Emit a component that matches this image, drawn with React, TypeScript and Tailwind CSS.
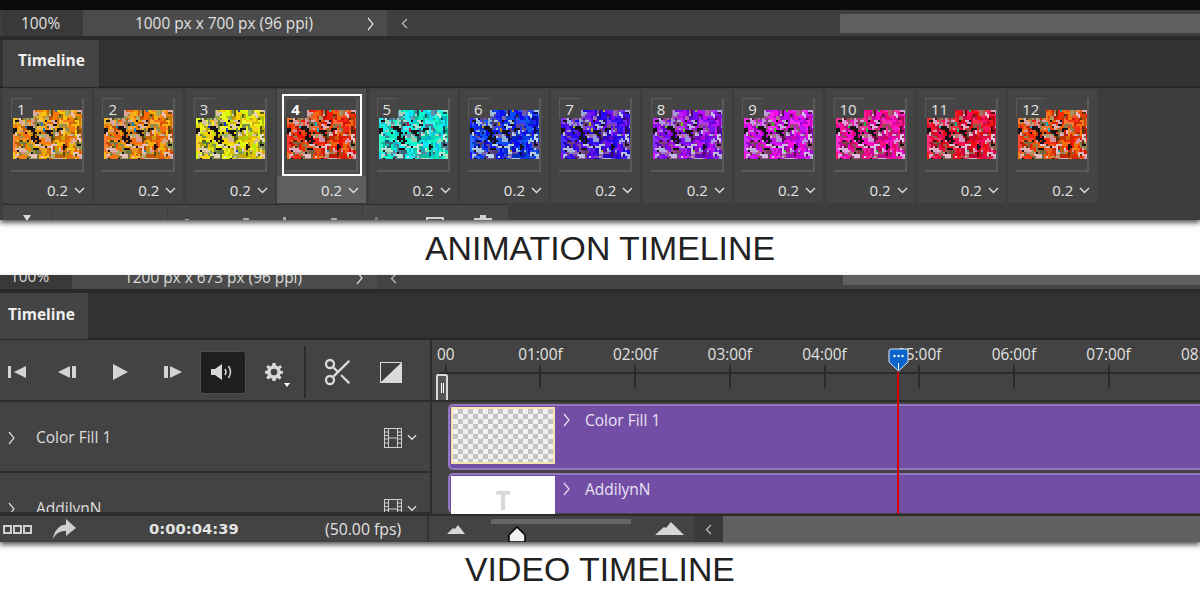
import { Scissors } from "lucide-react";

const UI = "font-['Open_Sans',sans-serif]";

// hue of every frame in the animation strip
const frames = [
  { n: 1, hue: 36 },
  { n: 2, hue: 32 },
  { n: 3, hue: 58 },
  { n: 4, hue: 12 },
  { n: 5, hue: 176 },
  { n: 6, hue: 232 },
  { n: 7, hue: 256 },
  { n: 8, hue: 276 },
  { n: 9, hue: 296 },
  { n: 10, hue: 322 },
  { n: 11, hue: 350 },
  { n: 12, hue: 16 },
];

const rulerLabels = ["00", "01:00f", "02:00f", "03:00f", "04:00f", "05:00f", "06:00f", "07:00f", "08:00f"];

function makeRandom(seed: number) {
  let s = seed;
  return () => {
    s = (s * 16807) % 2147483647;
    return s / 2147483647;
  };
}

// same noise for every frame, only the hue moves. cells copy a neighbour now and then so they clump
function Mosaic({ hue }: { hue: number }) {
  const rand = makeRandom(74511);
  const grid: string[][] = [];
  const cells = [];
  for (let y = 0; y < 25; y++) {
    grid.push([]);
    for (let x = 0; x < 35; x++) {
      const r = rand();
      const c = rand();
      const left = 1 - x / 35;
      const spot = Math.abs(x - 8 - (y - 8) * 0.5) < 1.6 && y > 7 && y < 17;
      let fill = `hsl(${hue + rand() * 26 - 13} 95% ${36 + rand() * 24}%)`;
      if (r < 0.06 || (spot && r < 0.6)) fill = "#171015";
      else if (r < 0.1) fill = `hsl(${hue + 10} 80% 20%)`;
      else if (r < 0.2 + left * 0.14) fill = `hsl(${hue + 335} 45% ${66 + rand() * 18}%)`;
      else if (r < 0.28 + left * 0.26) fill = `hsl(${hue + 25} 32% ${34 + rand() * 24}%)`;
      else if (r < 0.31 + left * 0.26) fill = `hsl(${hue + 170} 75% 42%)`;
      if (!spot && c < 0.3 && x > 0) fill = grid[y][x - 1];
      else if (!spot && c < 0.6 && y > 0) fill = grid[y - 1][x];
      grid[y].push(fill);
      cells.push(<rect key={x + "-" + y} x={x * 2} y={y * 2} width={2.1} height={2.1} fill={fill} />);
    }
  }
  return (
    <svg width="69" height="49" viewBox="0 0 69 49" className="block blur-[0.3px]">
      {cells}
    </svg>
  );
}

function ChevronThin({ className = "" }: { className?: string }) {
  return (
    <svg width="7" height="14" viewBox="0 0 7 14" className={className} fill="none" stroke="currentColor" strokeWidth="1.2">
      <path d="M1 1 L6 7 L1 13" />
    </svg>
  );
}

function ChevronLeft() {
  return (
    <svg width="7" height="11" viewBox="0 0 7 11" fill="none" stroke="#b5b5b5" strokeWidth="1.4">
      <path d="M6 1 L1.5 5.5 L6 10" />
    </svg>
  );
}

function ChevronDown({ w = 11 }: { w?: number }) {
  return (
    <svg width={w} height="7" viewBox="0 0 11 7" fill="none" stroke="#dedede" strokeWidth="1.4">
      <path d="M1 1 L5.5 5.5 L10 1" />
    </svg>
  );
}

function FilmIcon() {
  return (
    <svg width="18" height="20" viewBox="0 0 18 20" fill="none" stroke="#cfcfcf" strokeWidth="1" className="shrink-0">
      <rect x="0.5" y="0.5" width="17" height="19" />
      <path d="M4.5 0.5 V19.5 M13.5 0.5 V19.5 M4.5 10 H13.5 M0.5 4 H4.5 M0.5 7.5 H4.5 M0.5 11 H4.5 M0.5 15 H4.5 M13.5 4 H17.5 M13.5 7.5 H17.5 M13.5 11 H17.5 M13.5 15 H17.5" />
    </svg>
  );
}

function Frame({ n, hue }: { n: number; hue: number }) {
  const selected = n === 4;
  return (
    <div className={"relative w-[89px] h-[114px] shrink-0 mr-[2.4px] " + (selected ? "bg-[#4d4d4d]" : "bg-[#444444]")}>
      {selected && <div className="absolute left-0 right-0 bottom-0 h-[27px] bg-[#5f5f5f]" />}
      {selected && <div className="absolute left-[5px] top-[5px] w-[80px] h-[82px] border-2 border-white" />}
      <div className="absolute left-[8px] top-[9px] w-[73px] h-[74px] bg-[#454545] border-r-2 border-b-2 border-[#5a5a5a]">
        <div className="mt-[12px] ml-[2px]">
          <Mosaic hue={hue} />
        </div>
      </div>
      <div
        className={
          "absolute left-[8px] top-[9px] h-[20px] bg-[#464646] border-t border-l border-[#5a5a5a] text-[15px] leading-[20px] pl-[5px] pr-[7px] " +
          (selected ? "text-white font-bold" : "text-[#e4e4e4]")
        }
      >
        {n}
      </div>
      <div className="absolute right-[7px] bottom-[3px] flex items-center gap-[6px] text-[15px] leading-[20px] text-[#e4e4e4]">
        0.2
        <ChevronDown />
      </div>
    </div>
  );
}

function AnimationPanel() {
  return (
    <div className={"relative z-10 h-[220px] overflow-hidden bg-[#3d3d3d] shadow-[0_3px_5px_rgba(0,0,0,0.65)] text-[#e0e0e0] " + UI}>
      <div className="h-[10px] bg-[#0a0a0a]" />
      <div className="h-[26px] flex items-center bg-[#3e3e3e] pl-[3px]">
        <div className="w-[80px] h-full bg-[#393939] pl-[18px] text-[15.4px] leading-[27px]">100%</div>
        <div className="w-[304px] h-full bg-[#4b4b4b] flex items-center pl-[52px] pt-px text-[15.4px]">
          <span>1000 px x 700 px (96 ppi)</span>
          <ChevronThin className="ml-[54px]" />
        </div>
        <div className="ml-[14px]">
          <ChevronLeft />
        </div>
        <div className="ml-auto w-[360px] h-[19px] bg-[#606060] rounded-l-[2px]" />
      </div>
      <div className="h-[4px] bg-[#2a2a2a]" />
      <div className="h-[48px] flex bg-[#323232] border-b-2 border-[#262626] pl-[3px]">
        <div className="w-[96px] h-[47px] bg-[#444444] pl-[15px] text-[15.5px] leading-[40px] font-bold text-[#f0f0f0]">Timeline</div>
      </div>
      <div className="h-[114px] mt-px flex pl-[3px]">
        {frames.map((f) => (
          <Frame key={f.n} n={f.n} hue={f.hue} />
        ))}
      </div>
      <div className="h-[16px] mt-px flex pl-[3px] gap-px text-[#cfcfcf]">
        <div className="w-[48px] bg-[#474747] border-t border-[#2c2c2c] flex justify-end pr-[20px] pt-[10px]">
          <div className="w-0 h-0 border-x-[4px] border-x-transparent border-t-[6px] border-t-[#dcdcdc]" />
        </div>
        <div className="w-[115px] bg-[#474747] border-t border-[#2c2c2c]" />
        <div className="w-[194px] bg-[#474747] border-t border-[#2c2c2c] relative">
          <div className="absolute left-[17px] top-[14px] w-[4px] h-px bg-[#aaaaaa]" />
          <div className="absolute left-[75px] top-[13px] w-[6px] h-[2px] bg-[#aaaaaa]" />
          <div className="absolute left-[115px] top-[12px] w-[3px] h-[3px] bg-[#aaaaaa]" />
          <div className="absolute left-[163px] top-[13px] w-[6px] h-[2px] bg-[#aaaaaa]" />
        </div>
        <div className="w-[145px] bg-[#474747] border-t border-[#2c2c2c] relative">
          <div className="absolute left-[12px] top-[12px] w-[3px] h-[3px] bg-[#777777]" />
          <div className="absolute left-[63px] top-[12px] w-[18px] h-[8px] border-2 border-[#d0d0d0]" />
          <div className="absolute left-[111px] top-[13px] w-[18px] h-[2px] bg-[#d0d0d0]" />
          <div className="absolute left-[117px] top-[10px] w-[6px] h-[4px] border-2 border-[#d0d0d0]" />
        </div>
      </div>
    </div>
  );
}

function ControlRow() {
  return (
    <div className="h-[62px] pt-[4px] flex items-center border-b-2 border-[#2d2d2d] text-[#d4d4d4] relative">
      <svg width="18" height="14" viewBox="0 0 18 14" fill="#d4d4d4" className="ml-[8px]">
        <rect x="0" y="1" width="3" height="12" />
        <path d="M18 1 V13 L6 7 Z" />
      </svg>
      <svg width="18" height="14" viewBox="0 0 18 14" fill="#d4d4d4" className="ml-[32px]">
        <path d="M12 1 V13 L0 7 Z" />
        <rect x="14" y="1" width="4" height="12" />
      </svg>
      <svg width="16" height="16" viewBox="0 0 16 16" fill="#d4d4d4" className="ml-[37px]">
        <path d="M0 0 L15 8 L0 16 Z" />
      </svg>
      <svg width="18" height="14" viewBox="0 0 18 14" fill="#d4d4d4" className="ml-[35px]">
        <rect x="0" y="1" width="4" height="12" />
        <path d="M6 1 V13 L18 7 Z" />
      </svg>
      <div className="ml-[18px] w-[46px] h-[43px] rounded-[3px] bg-[#1e1e1e] border border-[#4e4e4e] flex items-center justify-center">
        <svg width="24" height="18" viewBox="0 0 24 18" fill="none">
          <path d="M0 6 H4 L11 1 V17 L4 12 H0 Z" fill="#d8d8d8" />
          <path d="M14 6 Q16 9 14 12 M17.5 3 Q21.5 9 17.5 15" stroke="#d8d8d8" strokeWidth="1.5" />
        </svg>
      </div>
      <svg width="18" height="18" viewBox="0 0 18 18" className="ml-[19px]">
        <path
          d="M7.5 0 H10.5 L11 2.6 L13.2 3.5 L15.4 2 L17 4.2 L15 6 L15.6 7.7 L18 8 V10.6 L15.6 11 L15 12.6 L16.6 14.6 L14.6 16.4 L12.6 15 L11 15.6 L10.5 18 H7.5 L7 15.6 L5.2 15 L3.2 16.4 L1.2 14.4 L2.8 12.5 L2.2 11 L0 10.6 V8 L2.2 7.5 L2.9 5.8 L1.2 4 L3.2 2 L5 3.4 L7 2.6 Z M9 5.8 A3.3 3.3 0 1 0 9 12.4 A3.3 3.3 0 1 0 9 5.8 Z"
          fill="#d8d8d8"
          fillRule="evenodd"
        />
      </svg>
      <div className="ml-px mt-[26px] w-0 h-0 border-x-[3.5px] border-x-transparent border-t-[4px] border-t-white" />
      <div className="ml-[14px] w-[2px] h-[52px] bg-[#2b2b2b]" />
      <Scissors size={32} strokeWidth={1.7} color="#dadada" className="ml-[16px] shrink-0" />
      <div className="ml-[26px] w-[22px] h-[21px] bg-[#dadada] border border-[#dadada] relative overflow-hidden">
        <svg width="20" height="19" viewBox="0 0 20 19" className="block">
          <path d="M0 0 H20 L0 19 Z" fill="#3d3d3d" />
        </svg>
      </div>
    </div>
  );
}

function LayerRow({ name, h }: { name: string; h: string }) {
  return (
    <div className={h + " flex items-start border-b-2 border-[#2d2d2d] overflow-hidden text-[#dedede] text-[15.5px]"}>
      <div className="flex items-center h-[71px]">
        <ChevronThin className="ml-[8px]" />
        <span className="ml-[21px] w-[348px]">{name}</span>
        <FilmIcon />
        <span className="ml-[5px]">
          <ChevronDown w={10} />
        </span>
      </div>
    </div>
  );
}

function Track({ name, tall }: { name: string; tall?: boolean }) {
  return (
    <div
      className={
        "ml-[16px] rounded-l-[5px] bg-[#724ea5] border-t-2 border-l-2 border-[#9478bf] flex " +
        (tall ? "h-[66px] border-b-2 mt-[2px] mb-[3px]" : "h-[40px]")
      }
    >
      {tall ? (
        <div className="ml-px mt-[1px] w-[104px] h-[57px] border-2 border-[#f4e6ae] bg-[length:10px_10px] bg-[conic-gradient(#c4c4c4_25%,#f2f2f2_0_50%,#c4c4c4_0_75%,#f2f2f2_0)] shrink-0" />
      ) : (
        <div className="ml-px mt-[1px] w-[104px] h-[60px] bg-white shrink-0 text-center text-[#d8d8d8] font-bold text-[26px] leading-[48px]">T</div>
      )}
      <ChevronThin className="ml-[8px] mt-[7px] text-[#e8e0f2]" />
      <span className="ml-[15px] mt-[3px] text-[15.5px] text-[#e9e2f3]">{name}</span>
    </div>
  );
}

function Ruler() {
  return (
    <div className="h-[62px] border-b-2 border-[#2d2d2d] relative overflow-hidden">
      <div className="flex ml-[-33.6px] w-[900px]">
        {rulerLabels.map((label, i) => (
          <div key={label} className="w-[94.7px] shrink-0 flex flex-col items-center">
            <span className="h-[20px] mt-[5px] text-[15.4px] leading-[20px] text-[#e2e2e2] whitespace-nowrap">{label}</span>
            <div className={"w-[2px] bg-[#2b2b2b] " + (i === 0 ? "h-[11px]" : "h-[23px]")} />
          </div>
        ))}
      </div>
      <div className="absolute left-[7px] right-0 top-[32px] h-[2px] bg-[#2b2b2b]" />
      <div className="absolute left-[4px] top-[34px] w-[12px] h-[28px] rounded-[2px] border-2 border-[#d8d8d8] bg-[#555555] flex items-center justify-center gap-px">
        <div className="w-px h-[10px] bg-white" />
        <div className="w-px h-[10px] bg-white" />
      </div>
    </div>
  );
}

function Playhead() {
  return (
    <div className="absolute left-[455.5px] top-[8px] w-[21px] h-[166px] flex flex-col items-center">
      <svg width="21" height="24" viewBox="0 0 21 24" className="shrink-0">
        <path d="M3 1 H18 Q20 1 20 3 V14 L10.5 23 L1 14 V3 Q1 1 3 1 Z" fill="#0a64cc" stroke="#dfe9f5" strokeWidth="1" />
        <circle cx="6.5" cy="8" r="1.2" fill="#fff" />
        <circle cx="10.5" cy="8" r="1.2" fill="#fff" />
        <circle cx="14.5" cy="8" r="1.2" fill="#fff" />
        <rect x="10" y="15" width="1" height="7" fill="#fff" />
      </svg>
      <div className="w-[2px] flex-1 bg-[#d40000]" />
    </div>
  );
}

function BottomBar() {
  return (
    <div className="h-[28px] flex bg-[#434343] border-t-2 border-[#2d2d2d] text-[#e2e2e2]">
      <div className="w-[429px] flex items-center border-r-2 border-[#333333] shrink-0">
        <div className="ml-[3px] flex gap-px">
          <div className="w-[9px] h-[9px] border-2 border-[#d0d0d0]" />
          <div className="w-[9px] h-[9px] border-2 border-[#d0d0d0]" />
          <div className="w-[9px] h-[9px] border-2 border-[#d0d0d0]" />
        </div>
        <svg width="23" height="20" viewBox="0 0 23 20" className="ml-[21px]">
          <path d="M13 0 L23 9 L13 17 V12 C7 12 3 14 0 20 C1 12 6 6 13 5.5 Z" fill="#d0d0d0" />
        </svg>
        <span className="ml-[73px] w-[176px] mt-px font-['DejaVu_Sans',sans-serif] font-bold text-[14.8px]">0:00:04:39</span>
        <span className="text-[15.8px] mt-px">(50.00 fps)</span>
      </div>
      <div className="w-[265px] relative shrink-0">
        <svg width="18" height="9" viewBox="0 0 18 9" className="absolute left-[18px] top-[9px]">
          <path d="M0 9 L6 3 L8 4 L11 0 L18 9 Z" fill="#d6d6d6" />
        </svg>
        <div className="absolute left-[62px] top-[3px] w-[140px] h-[5px] bg-[#666666]" />
        <svg width="20" height="16" viewBox="0 0 20 16" className="absolute left-[78px] top-[10px]">
          <path d="M10 1 L18 9 V16 H2 V9 Z" fill="#f0f0f0" stroke="#000" strokeWidth="1.5" />
        </svg>
        <svg width="29" height="13" viewBox="0 0 29 13" className="absolute left-[226px] top-[6px]">
          <path d="M0 13 L9 5 L11 6 L16 0 L29 13 Z" fill="#d6d6d6" />
        </svg>
      </div>
      <div className="w-[29px] bg-[#3a3a3a] flex items-center justify-center shrink-0">
        <ChevronLeft />
      </div>
      <div className="flex-1 bg-[#606060]" />
    </div>
  );
}

function VideoPanel() {
  return (
    <div className={"relative z-10 h-[267px] overflow-hidden bg-[#434343] shadow-[0_3px_5px_rgba(0,0,0,0.65)] " + UI}>
      <div className="h-[14px] flex bg-[#434343] overflow-hidden text-[15.4px] leading-[20px] text-[#dcdcdc]">
        <div className="w-[72px] bg-[#393939] pl-[10px] -mt-[8px] h-[22px]">100%</div>
        <div className="w-[305px] bg-[#4b4b4b] -mt-[8px] h-[22px] pl-[52px] flex items-center">
          <span>1200 px x 673 px (96 ppi)</span>
          <ChevronThin className="ml-[54px]" />
        </div>
        <div className="ml-[13px] -mt-[2px]">
          <ChevronLeft />
        </div>
        <div className="ml-auto w-[357px] h-[10px] bg-[#606060]" />
      </div>
      <div className="h-[4px] bg-[#2a2a2a]" />
      <div className="h-[47px] flex bg-[#323232] border-b-2 border-[#262626]">
        <div className="w-[88px] h-[46px] bg-[#444444] pl-[8px] text-[15.5px] leading-[42px] font-bold text-[#f0f0f0]">Timeline</div>
      </div>
      <div className="h-[174px] flex overflow-hidden">
        <div className="w-[432px] shrink-0 border-r-2 border-[#2d2d2d]">
          <ControlRow />
          <LayerRow name="Color Fill 1" h="h-[71px]" />
          <LayerRow name="AddilynN" h="h-[41px]" />
        </div>
        <div className="flex-1 relative overflow-hidden">
          <Ruler />
          <Track name="Color Fill 1" tall />
          <Track name="AddilynN" />
          <Playhead />
        </div>
      </div>
      <BottomBar />
    </div>
  );
}

export default function App() {
  return (
    <div className="w-[1200px] h-[593px] bg-white overflow-hidden">
      <AnimationPanel />
      <div className="h-[55px] pt-[2px] flex items-center justify-center font-['Liberation_Sans',sans-serif] text-[33.8px] text-[#222222]">
        ANIMATION TIMELINE
      </div>
      <VideoPanel />
      <div className="h-[51px] pt-[4px] flex items-center justify-center font-['Liberation_Sans',sans-serif] text-[33.8px] text-[#222222]">
        VIDEO TIMELINE
      </div>
    </div>
  );
}
